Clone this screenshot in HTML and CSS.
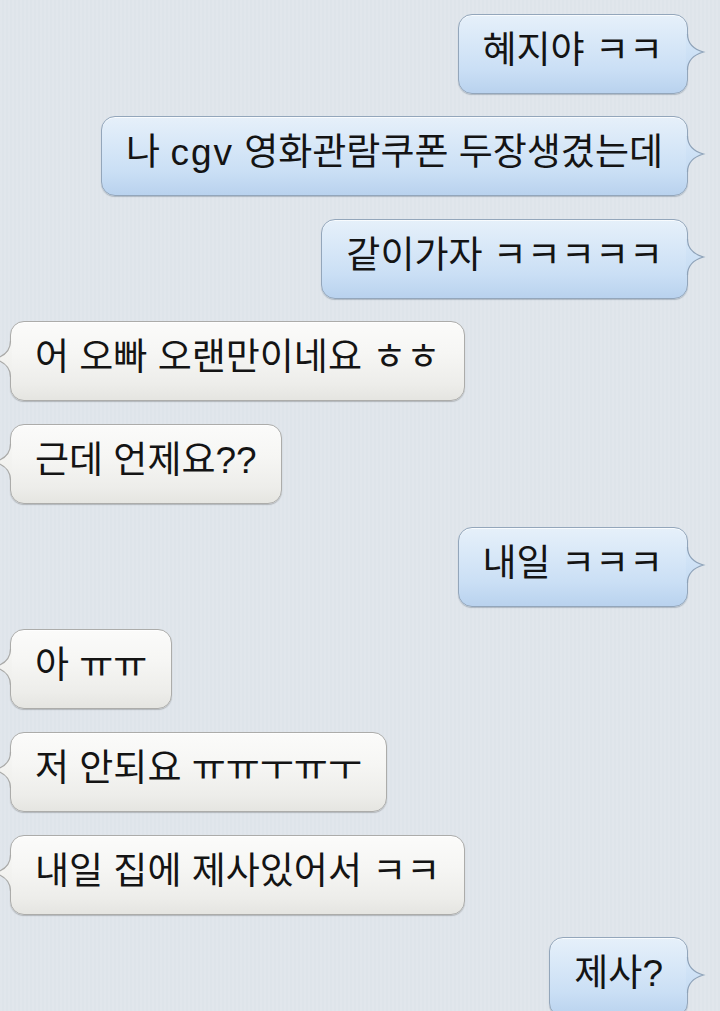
FILE: index.html
```html
<!DOCTYPE html>
<html lang="ko">
<head>
<meta charset="utf-8">
<title>Messages</title>
<link rel="stylesheet" href="styles.css">
</head>
<body>
<svg class="defs" width="0" height="0" aria-hidden="true">
  <defs>
    <linearGradient id="g-sent" x1="0" y1="0" x2="0" y2="1">
      <stop offset="0" stop-color="#d6e7f8"/>
      <stop offset="1" stop-color="#c6dcf3"/>
    </linearGradient>
    <linearGradient id="g-recv" x1="0" y1="0" x2="0" y2="1">
      <stop offset="0" stop-color="#f6f6f4"/>
      <stop offset="1" stop-color="#efefec"/>
    </linearGradient>
    <symbol id="tail-sent" viewBox="0 0 20 36">
      <path d="M0 0 H1.5 C1.5 9 7 15 17.5 18 C7 21 1.5 27 1.5 36 H0 Z" fill="url(#g-sent)"/>
      <path d="M1.5 0 C1.5 9 7 15 17.5 18 C7 21 1.5 27 1.5 36" fill="none" stroke="#8ea2b8" stroke-width="1.2"/>
    </symbol>
    <symbol id="tail-recv" viewBox="0 0 20 36">
      <path d="M20 0 H18.5 C18.5 9 13 15 2.5 18 C13 21 18.5 27 18.5 36 H20 Z" fill="url(#g-recv)"/>
      <path d="M18.5 0 C18.5 9 13 15 2.5 18 C13 21 18.5 27 18.5 36" fill="none" stroke="#a9a9a7" stroke-width="1.2"/>
    </symbol>
  </defs>
</svg>
<main class="chat">
  <div class="row sent"><div class="bubble">혜지야 ㅋㅋ<svg class="tail"><use href="#tail-sent"/></svg></div></div>
  <div class="row sent"><div class="bubble">나 <span class="latin">cgv</span> 영화관람쿠폰 두장생겼는데<svg class="tail"><use href="#tail-sent"/></svg></div></div>
  <div class="row sent"><div class="bubble">같이가자 ㅋㅋㅋㅋㅋ<svg class="tail"><use href="#tail-sent"/></svg></div></div>
  <div class="row recv"><div class="bubble">어 오빠 오랜만이네요 ㅎㅎ<svg class="tail"><use href="#tail-recv"/></svg></div></div>
  <div class="row recv"><div class="bubble">근데 언제요??<svg class="tail"><use href="#tail-recv"/></svg></div></div>
  <div class="row sent"><div class="bubble">내일 ㅋㅋㅋ<svg class="tail"><use href="#tail-sent"/></svg></div></div>
  <div class="row recv"><div class="bubble">아 ㅠㅠ<svg class="tail"><use href="#tail-recv"/></svg></div></div>
  <div class="row recv"><div class="bubble">저 안되요 ㅠㅠㅜㅠㅜ<svg class="tail"><use href="#tail-recv"/></svg></div></div>
  <div class="row recv"><div class="bubble">내일 집에 제사있어서 ㅋㅋ<svg class="tail"><use href="#tail-recv"/></svg></div></div>
  <div class="row sent"><div class="bubble">제사?<svg class="tail"><use href="#tail-sent"/></svg></div></div>
</main>
</body>
</html>
```

FILE: styles.css
```css
html, body {
  margin: 0;
  padding: 0;
}

body {
  width: 720px;
  height: 1011px;
  overflow: hidden;
  background-color: #dee4ea;
  background-image: repeating-linear-gradient(90deg, rgba(255,255,255,0.09) 0 2px, rgba(0,0,0,0) 2px 4px);
  font-family: "Liberation Sans", "Noto Sans CJK KR", sans-serif;
  color: #141414;
}

.defs {
  position: absolute;
  width: 0;
  height: 0;
}

.chat {
  display: flex;
  flex-direction: column;
  gap: 22.67px;
  padding-top: 13.5px;
}

.row {
  display: flex;
}

.row.sent {
  justify-content: flex-end;
  padding-right: 32px;
}

.row.recv {
  justify-content: flex-start;
  padding-left: 10px;
}

.bubble {
  position: relative;
  box-sizing: border-box;
  height: 80px;
  padding: 14px 24px 20px 24px;
  border-radius: 14px;
  font-size: 37px;
  line-height: 44px;
  white-space: nowrap;
  border: 1px solid;
}

.latin {
  letter-spacing: 2px;
}

.sent .bubble {
  border-color: #93a6bb;
  background: linear-gradient(to bottom, #e6f0fa 0%, #dae9f8 30%, #cadff5 70%, #b9d2ee 100%);
  box-shadow: 0 1px 1px rgba(60, 80, 100, 0.3), inset 0 1px 0 rgba(255,255,255,0.7);
}

.recv .bubble {
  border-color: #acacaa;
  background: linear-gradient(to bottom, #fbfbfa 0%, #f6f6f4 40%, #ededea 80%, #e5e5e1 100%);
  box-shadow: 0 1px 1px rgba(60, 60, 60, 0.28), inset 0 1px 0 rgba(255,255,255,0.8);
}

.tail {
  position: absolute;
  top: calc(50% - 20px);
  width: 20px;
  height: 36px;
  overflow: visible;
}

.sent .tail {
  right: -19px;
}

.recv .tail {
  left: -19px;
}
```
